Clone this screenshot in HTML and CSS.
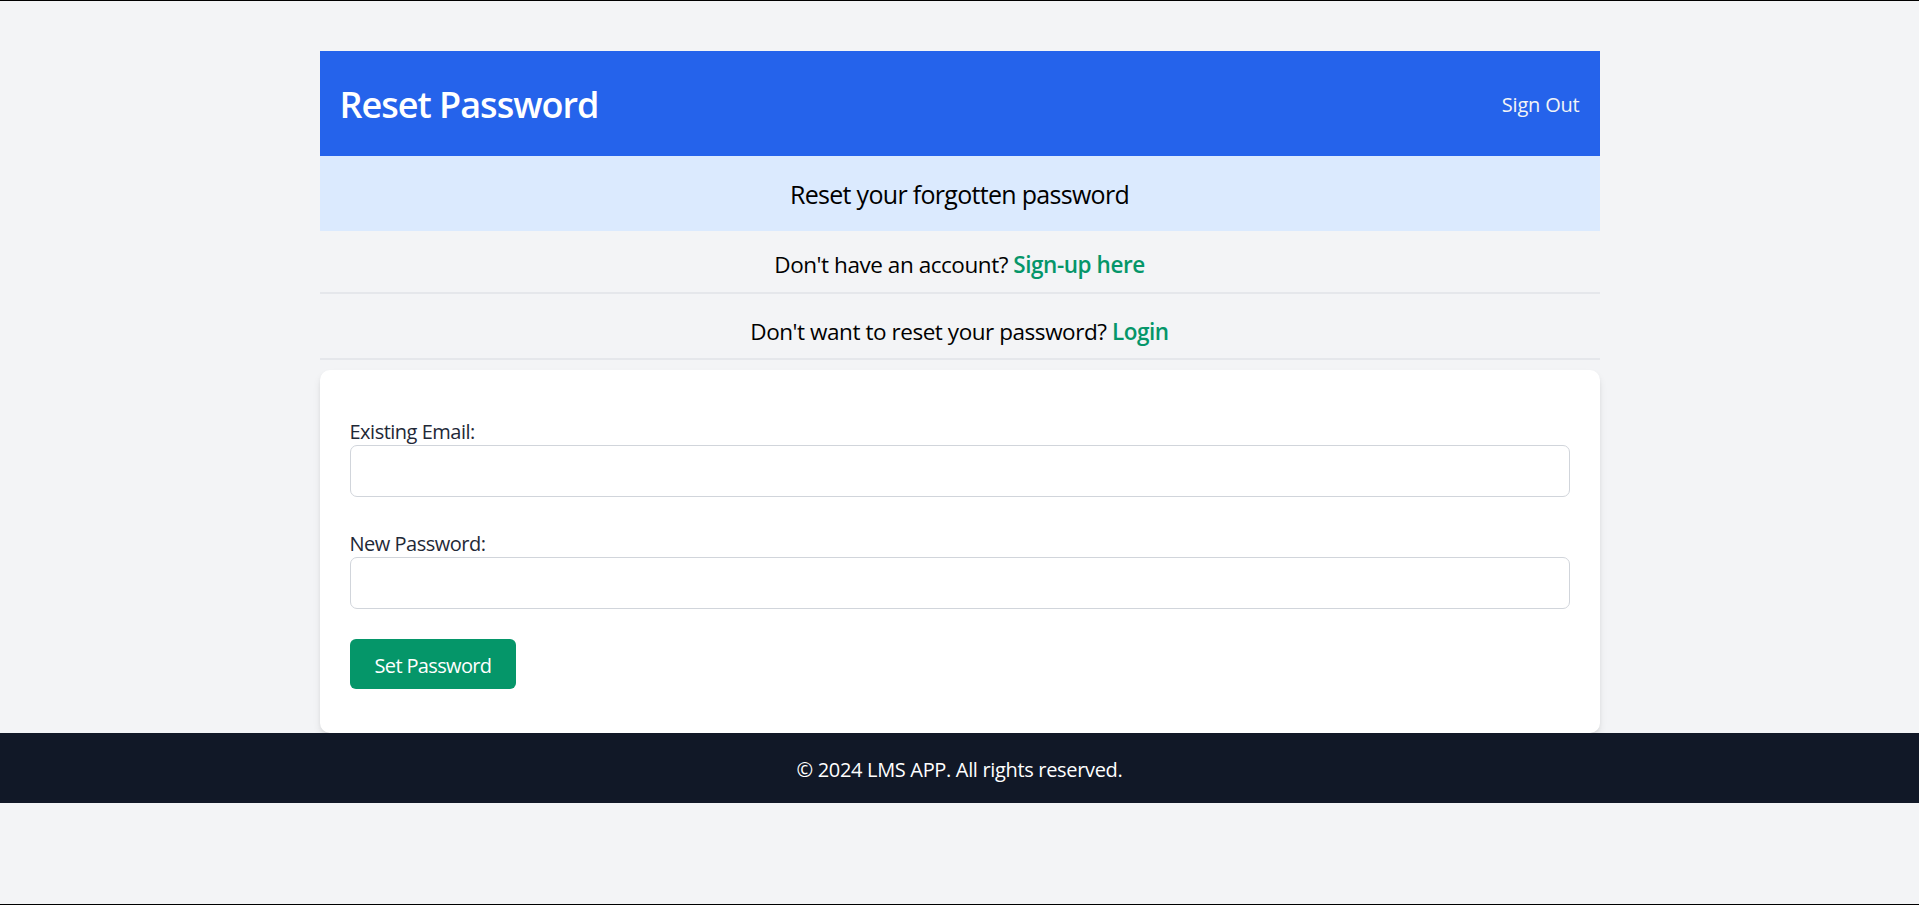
FILE: index.html
```html
<!DOCTYPE html>
<html lang="en">
<head>
<meta charset="utf-8">
<title>Reset Password</title>
<link rel="stylesheet" href="styles.css">
</head>
<body>
<div class="page">
  <main class="container">
    <header class="topbar">
      <h1 class="title">Reset Password</h1>
      <a class="signout" href="#">Sign Out</a>
    </header>
    <div class="banner">Reset your forgotten password</div>
    <p class="linkrow first">Don't have an account? <a class="green" href="#">Sign-up here</a></p>
    <p class="linkrow second">Don't want to reset your password? <a class="green" href="#">Login</a></p>
    <form class="card">
      <label class="label" for="email">Existing Email:</label>
      <input class="field" id="email" type="email">
      <label class="label" for="pw">New Password:</label>
      <input class="field" id="pw" type="password">
      <button class="btn" type="button">Set Password</button>
    </form>
  </main>
  <footer class="footer">© 2024 LMS APP. All rights reserved.</footer>
</div>
</body>
</html>
```
FILE: styles.css
```css
* { box-sizing: border-box; }
html, body { margin: 0; padding: 0; }
body {
  background: #f3f4f6;
  font-family: "Open Sans", "Noto Sans", sans-serif;
  color: #000;
}
.page {
  min-height: 100vh;
  border-top: 1px solid #000;
  border-bottom: 1px solid #000;
  display: flex;
  flex-direction: column;
}
.container {
  width: 1280px;
  margin: 50px auto 0;
}
.topbar {
  background: #2563eb;
  height: 105px;
  padding: 0 20px;
  display: flex;
  align-items: center;
  justify-content: space-between;
}
.title {
  margin: 0;
  padding-top: 2px;
  color: #fff;
  font-size: 36px;
  line-height: 45px;
  font-weight: 600;
  letter-spacing: -1px;
}
.signout {
  color: #f3f4f6;
  text-decoration: none;
  font-size: 20px;
  line-height: 30px;
  padding-top: 2px;
  letter-spacing: -0.2px;
}
.banner {
  background: #dbeafe;
  height: 75px;
  padding: 21px 20px 19px;
  text-align: center;
  font-size: 25px;
  line-height: 35px;
  letter-spacing: -0.7px;
}
.linkrow {
  margin: 0;
  text-align: center;
  font-size: 22.5px;
  line-height: 35px;
  border-bottom: 2px solid #e5e7eb;
  letter-spacing: -0.45px;
}
.linkrow.first { padding: 16px 0 10px; }
.linkrow.second { padding: 20px 0 9px; }
.green {
  color: #059669;
  font-weight: 600;
  text-decoration: none;
}
.card {
  margin-top: 10px;
  background: #fff;
  border-radius: 10px;
  box-shadow: 0 5px 8px -1px rgba(0,0,0,0.1), 0 2px 5px -2px rgba(0,0,0,0.1);
  padding: 45px 30px 44px;
  display: flex;
  flex-direction: column;
  align-items: flex-start;
}
.label {
  display: block;
  height: 30px;
  padding-top: 2px;
  font-size: 20px;
  line-height: 30px;
  color: #1f2937;
  letter-spacing: -0.5px;
}
.field {
  display: block;
  width: 100%;
  height: 52px;
  border: 1px solid #d1d5db;
  border-radius: 7px;
  margin: 0 0 30px;
  background: #fff;
  font: inherit;
}
.btn {
  background: #059669;
  color: #fff;
  border: 0;
  border-radius: 6px;
  height: 50px;
  padding: 3px 25px 0;
  font-family: inherit;
  font-size: 20px;
  line-height: 30px;
  letter-spacing: -0.65px;
}
.footer {
  background: #111827;
  color: #fff;
  text-align: center;
  height: 70px;
  padding: 22px 20px 18px;
  font-size: 20px;
  line-height: 30px;
  letter-spacing: -0.33px;
}
```
